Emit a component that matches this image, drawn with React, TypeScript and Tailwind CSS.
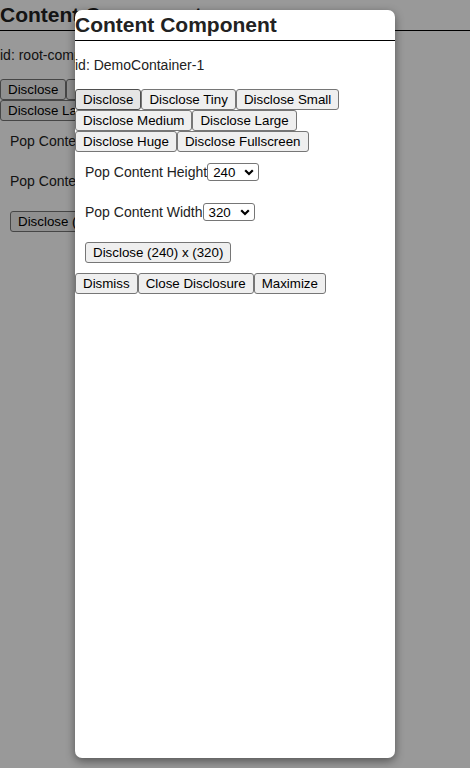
import React from "react";

const Btn = ({ children, hover }: { children: React.ReactNode; hover?: boolean }) => (
  <button
    className={
      hover
        ? "h-[21px] px-[7px] border border-[#4f4f4f] rounded-[3px] bg-[#e5e5e5] text-[13.333px] leading-[15px] text-black whitespace-nowrap"
        : "h-[21px] px-[7px] border border-[#767676] rounded-[3px] bg-[#efefef] text-[13.333px] leading-[15px] text-black whitespace-nowrap"
    }
  >
    {children}
  </button>
);

const Select = ({ value }: { value: string }) => (
  <div className="relative h-[18px] w-[52px] border border-[#767676] rounded-[3px] bg-white text-[13.333px] leading-[15px] text-black flex items-center pl-[5px]">
    <span>{value}</span>
    <svg className="absolute right-[4px] top-[5px]" width="10" height="7" viewBox="0 0 10 7">
      <path d="M1.2 1.3 L5 5 L8.8 1.3" fill="none" stroke="#000" strokeWidth="2.2" />
    </svg>
  </div>
);

const Content = ({ id, bottom, hover }: { id: string; bottom?: boolean; hover?: boolean }) => (
  <div>
    <div className="h-[31px] border-b border-black text-[21px] font-bold leading-[30px] whitespace-nowrap">
      Content Component
    </div>
    <div className="my-[16px] text-[14px] leading-[16px] whitespace-nowrap">id: {id}</div>
    <div className="flex flex-wrap">
      <Btn hover={hover}>Disclose</Btn>
      <Btn>Disclose Tiny</Btn>
      <Btn>Disclose Small</Btn>
      <Btn>Disclose Medium</Btn>
      <Btn>Disclose Large</Btn>
      <Btn>Disclose Huge</Btn>
      <Btn>Disclose Fullscreen</Btn>
    </div>
    <div className="p-[10px] text-[14px]">
      <div className="flex items-center h-[20px]">
        <span className="leading-[16px] whitespace-nowrap">Pop Content Height</span>
        <Select value="240" />
      </div>
      <div className="flex items-center h-[20px] mt-[20px]">
        <span className="leading-[16px] whitespace-nowrap">Pop Content Width</span>
        <Select value="320" />
      </div>
      <div className="flex mt-[20px]">
        <Btn>Disclose (240) x (320)</Btn>
      </div>
    </div>
    {bottom && (
      <div className="flex flex-wrap">
        <Btn>Dismiss</Btn>
        <Btn>Close Disclosure</Btn>
        <Btn>Maximize</Btn>
      </div>
    )}
  </div>
);

export default function App() {
  return (
    <div className="relative w-[470px] h-[768px] overflow-hidden bg-white font-['Liberation_Sans',Arial,sans-serif] text-[#222]">
      <Content id="root-component" />
      <div className="absolute inset-0 bg-black/40" />
      <div className="absolute left-[75px] top-[10px] w-[320px] h-[748px] bg-white rounded-[7px] shadow-[0_3px_10px_rgba(0,0,0,0.45)] overflow-hidden">
        <Content id="DemoContainer-1" bottom hover />
      </div>
    </div>
  );
}
